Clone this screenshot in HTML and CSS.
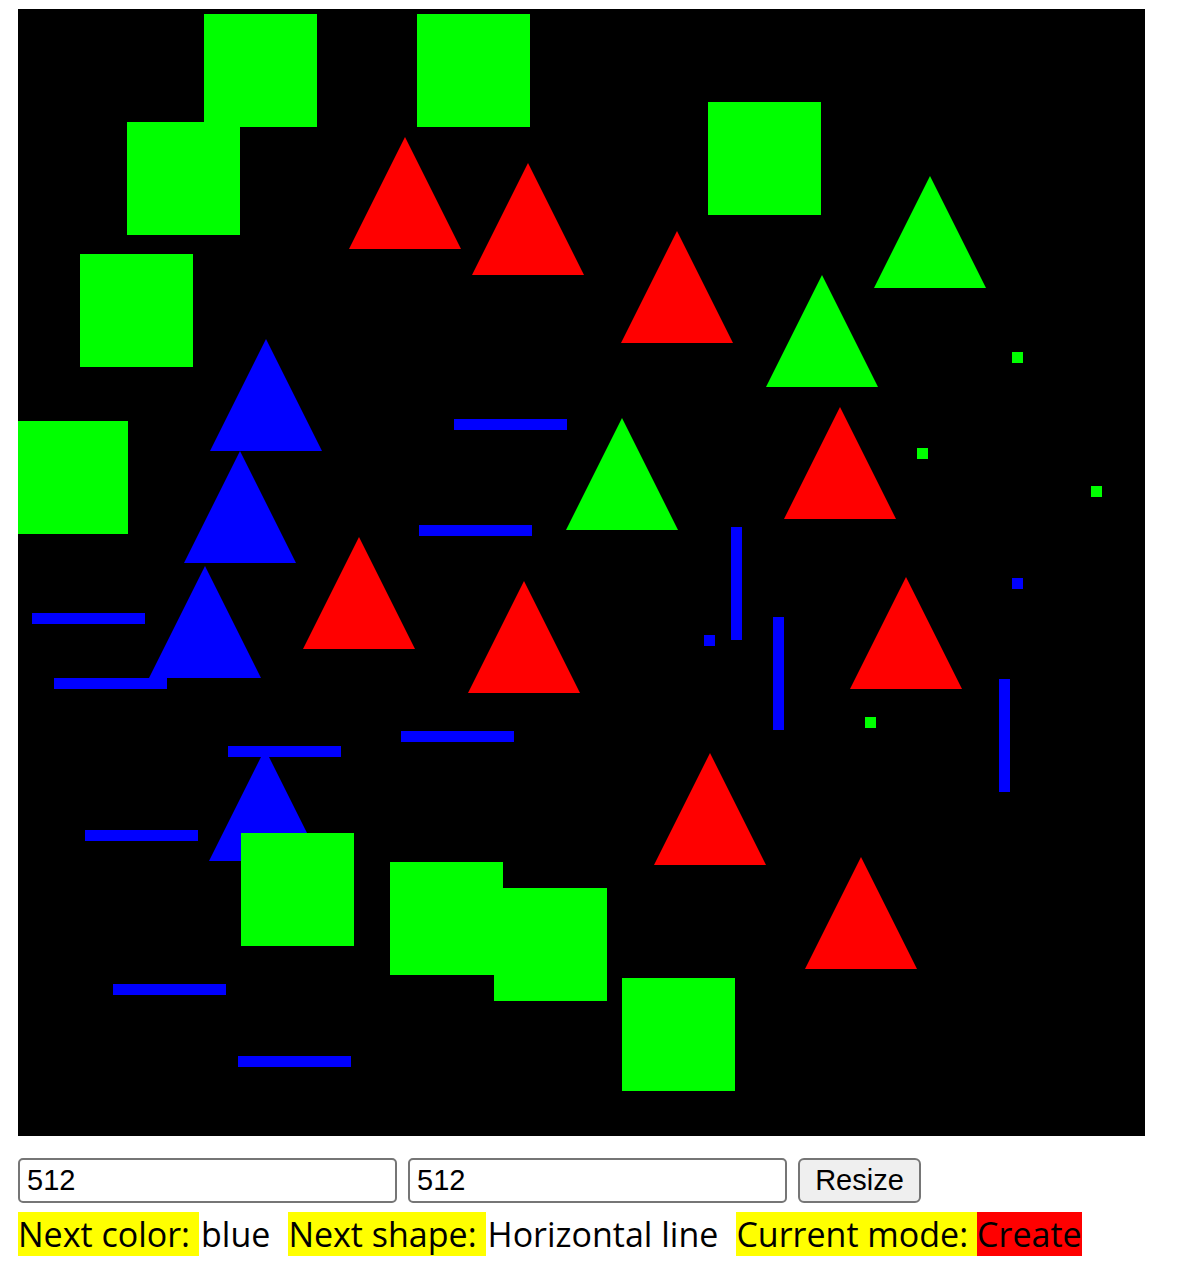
FILE: index.html
```html
<!DOCTYPE html>
<html lang="en">
<head>
    <meta charset="UTF-8">
    <title>Shapes</title>
    <link rel="stylesheet" href="styles.css">
</head>
<body>
    <svg class="board" width="1127" height="1127" viewBox="18 9 1127 1127">
        <rect x="18" y="9" width="1127" height="1127" fill="#000"/>

        <!-- green squares -->
        <g fill="#00ff00">
            <rect x="204" y="14" width="113" height="113"/>
            <rect x="417" y="14" width="113" height="113"/>
            <rect x="127" y="122" width="113" height="113"/>
            <rect x="708" y="102" width="113" height="113"/>
            <rect x="80" y="254" width="113" height="113"/>
            <rect x="15" y="421" width="113" height="113"/>
            <rect x="390" y="862" width="113" height="113"/>
            <rect x="494" y="888" width="113" height="113"/>
            <rect x="622" y="978" width="113" height="113"/>
        </g>

        <!-- triangles -->
        <g fill="#ff0000">
            <polygon points="405,137 461,249 349,249"/>
            <polygon points="528,163 584,275 472,275"/>
            <polygon points="677,231 733,343 621,343"/>
            <polygon points="840,407 896,519 784,519"/>
            <polygon points="359,537 415,649 303,649"/>
            <polygon points="524,581 580,693 468,693"/>
            <polygon points="906,577 962,689 850,689"/>
            <polygon points="710,753 766,865 654,865"/>
            <polygon points="861,857 917,969 805,969"/>
        </g>
        <g fill="#00ff00">
            <polygon points="930,176 986,288 874,288"/>
            <polygon points="822,275 878,387 766,387"/>
            <polygon points="622,418 678,530 566,530"/>
        </g>
        <g fill="#0000ff">
            <polygon points="266,339 322,451 210,451"/>
            <polygon points="240,451 296,563 184,563"/>
            <polygon points="205,566 261,678 149,678"/>
            <polygon points="265,749 321,861 209,861"/>
        </g>

        <!-- lines -->
        <g fill="#0000ff">
            <rect x="454" y="419" width="113" height="11"/>
            <rect x="419" y="525" width="113" height="11"/>
            <rect x="32" y="613" width="113" height="11"/>
            <rect x="54" y="678" width="113" height="11"/>
            <rect x="228" y="746" width="113" height="11"/>
            <rect x="401" y="731" width="113" height="11"/>
            <rect x="85" y="830" width="113" height="11"/>
            <rect x="113" y="984" width="113" height="11"/>
            <rect x="238" y="1056" width="113" height="11"/>
            <rect x="731" y="527" width="11" height="113"/>
            <rect x="773" y="617" width="11" height="113"/>
            <rect x="999" y="679" width="11" height="113"/>
            <rect x="1012" y="578" width="11" height="11"/>
            <rect x="704" y="635" width="11" height="11"/>
        </g>

        <!-- dots and last square -->
        <g fill="#00ff00">
            <rect x="1012" y="352" width="11" height="11"/>
            <rect x="917" y="448" width="11" height="11"/>
            <rect x="1091" y="486" width="11" height="11"/>
            <rect x="865" y="717" width="11" height="11"/>
            <rect x="241" y="833" width="113" height="113"/>
        </g>
    </svg>

    <div class="controls">
        <input type="text" class="size-input" value="512">
        <input type="text" class="size-input" value="512">
        <button class="resize-btn">Resize</button>
    </div>

    <div class="status">
        <div class="group">
            <span class="label">Next color:</span><span class="value">blue</span>
        </div>
        <div class="group">
            <span class="label">Next shape:</span><span class="value">Horizontal line</span>
        </div>
        <div class="group">
            <span class="label">Current mode:</span><span class="value mode">Create</span>
        </div>
    </div>
</body>
</html>
```

FILE: styles.css
```css
body { margin: 9px 18px; background: #fff; font-family: "Open Sans", sans-serif; }
.board { display: block; }
.controls { display: flex; gap: 11px; margin-top: 22px; }
.size-input { box-sizing: border-box; width: 379px; height: 45px; border: 2px solid #767676; border-radius: 5px; padding: 0 7px; font: 29px "Liberation Sans", Arial, sans-serif; color: #000; }
.resize-btn { box-sizing: border-box; width: 123px; height: 45px; border: 2px solid #767676; border-radius: 6px; background: #efefef; font: 29px "Liberation Sans", Arial, sans-serif; color: #000; padding: 0; }
.status { display: flex; gap: 18px; margin-top: 9px; font-size: 34px; line-height: 44px; }
.group { display: flex; }
.label { background: #ffff00; padding-right: 9px; }
.value { padding-left: 2px; }
.mode { background: #ff0000; padding-left: 0; }
```
